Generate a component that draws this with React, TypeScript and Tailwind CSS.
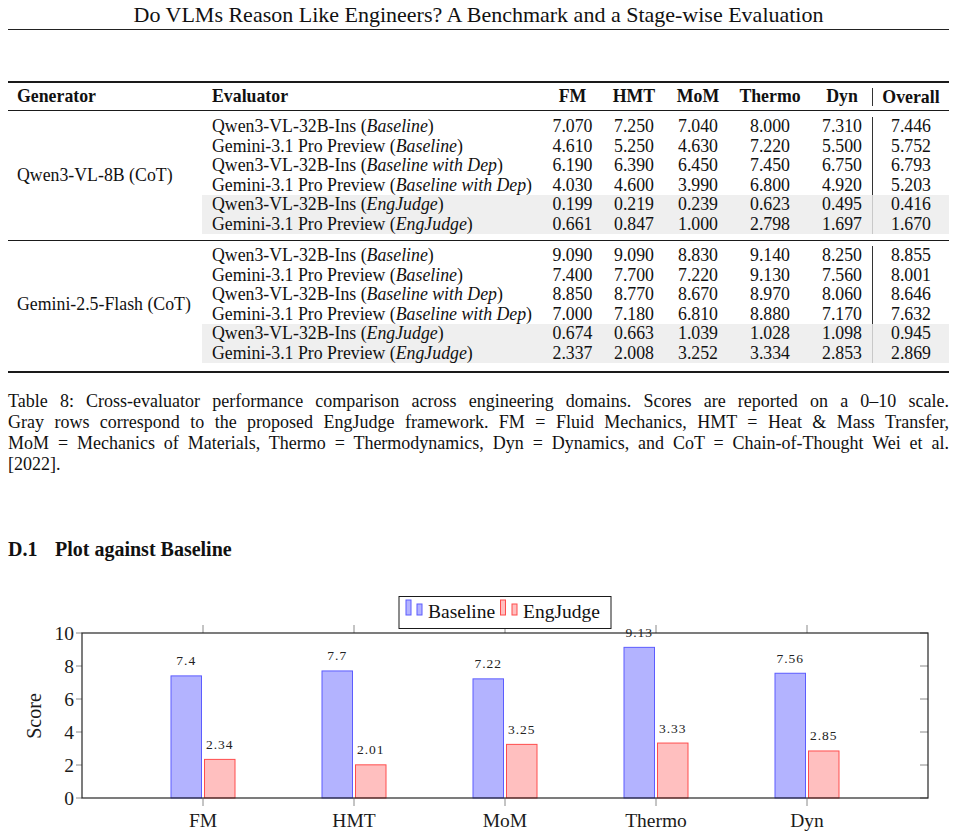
import React from "react";

type Row = {
  model: string;
  mode: string;
  scores: string[];
  overall: string;
  gray?: boolean;
};

const GROUPS: { generator: string; rows: Row[] }[] = [
  {
    generator: "Qwen3-VL-8B (CoT)",
    rows: [
      { model: "Qwen3-VL-32B-Ins", mode: "Baseline", scores: ["7.070", "7.250", "7.040", "8.000", "7.310"], overall: "7.446" },
      { model: "Gemini-3.1 Pro Preview", mode: "Baseline", scores: ["4.610", "5.250", "4.630", "7.220", "5.500"], overall: "5.752" },
      { model: "Qwen3-VL-32B-Ins", mode: "Baseline with Dep", scores: ["6.190", "6.390", "6.450", "7.450", "6.750"], overall: "6.793" },
      { model: "Gemini-3.1 Pro Preview", mode: "Baseline with Dep", scores: ["4.030", "4.600", "3.990", "6.800", "4.920"], overall: "5.203" },
      { model: "Qwen3-VL-32B-Ins", mode: "EngJudge", scores: ["0.199", "0.219", "0.239", "0.623", "0.495"], overall: "0.416", gray: true },
      { model: "Gemini-3.1 Pro Preview", mode: "EngJudge", scores: ["0.661", "0.847", "1.000", "2.798", "1.697"], overall: "1.670", gray: true },
    ],
  },
  {
    generator: "Gemini-2.5-Flash (CoT)",
    rows: [
      { model: "Qwen3-VL-32B-Ins", mode: "Baseline", scores: ["9.090", "9.090", "8.830", "9.140", "8.250"], overall: "8.855" },
      { model: "Gemini-3.1 Pro Preview", mode: "Baseline", scores: ["7.400", "7.700", "7.220", "9.130", "7.560"], overall: "8.001" },
      { model: "Qwen3-VL-32B-Ins", mode: "Baseline with Dep", scores: ["8.850", "8.770", "8.670", "8.970", "8.060"], overall: "8.646" },
      { model: "Gemini-3.1 Pro Preview", mode: "Baseline with Dep", scores: ["7.000", "7.180", "6.810", "8.880", "7.170"], overall: "7.632" },
      { model: "Qwen3-VL-32B-Ins", mode: "EngJudge", scores: ["0.674", "0.663", "1.039", "1.028", "1.098"], overall: "0.945", gray: true },
      { model: "Gemini-3.1 Pro Preview", mode: "EngJudge", scores: ["2.337", "2.008", "3.252", "3.334", "2.853"], overall: "2.869", gray: true },
    ],
  },
];

// widths of FM, HMT, MoM, Thermo, Dyn
const SCORE_COLS = ["w-[55px]", "w-[68px]", "w-[60px]", "w-[84px]", "w-[60px]"];
const HEADERS = ["FM", "HMT", "MoM", "Thermo", "Dyn"];

function DataRow({ row }: { row: Row }) {
  return (
    <div className={`flex h-[19.5px] items-center ${row.gray ? "bg-[#efefef]" : ""}`}>
      <div className="w-[343px] pl-[10px] whitespace-nowrap">
        {row.model} (<i>{row.mode}</i>)
      </div>
      {row.scores.map((s, i) => (
        <div key={i} className={`${SCORE_COLS[i]} text-center`}>
          {s}
        </div>
      ))}
      <div
        className={`flex h-full w-[77px] items-center justify-center border-l ${
          row.gray ? "border-[#c8c8c8]" : "border-[#333]"
        }`}
      >
        {row.overall}
      </div>
    </div>
  );
}

function RowGroup({ index, className }: { index: number; className: string }) {
  const group = GROUPS[index];
  return (
    <div className={`flex ${className}`}>
      <div className="flex w-[194px] items-center pl-[9px]">{group.generator}</div>
      <div className="flex flex-col">
        {group.rows.map((r, i) => (
          <DataRow key={i} row={r} />
        ))}
      </div>
    </div>
  );
}

function ResultsTable() {
  return (
    <div className="text-[17.8px] leading-[19.5px]">
      <div className="h-[2px] bg-[#1a1a1a]" />
      <div className="flex h-[27px] items-center font-bold">
        <div className="w-[194px] pl-[9px]">Generator</div>
        <div className="w-[343px] pl-[10px]">Evaluator</div>
        {HEADERS.map((h, i) => (
          <div key={h} className={`${SCORE_COLS[i]} text-center`}>
            {h}
          </div>
        ))}
        <div className="w-[77px] border-l border-[#333] text-center leading-[18px]">Overall</div>
      </div>
      <div className="h-px bg-[#1a1a1a]" />
      <RowGroup index={0} className="pt-[6px] pb-[6px]" />
      <div className="h-px bg-[#1a1a1a]" />
      <RowGroup index={1} className="pt-[5px] pb-[8px]" />
      <div className="h-[2px] bg-[#1a1a1a]" />
    </div>
  );
}

const CAPTION = [
  "Table 8: Cross-evaluator performance comparison across engineering domains. Scores are reported on a 0–10 scale.",
  "Gray rows correspond to the proposed EngJudge framework. FM = Fluid Mechanics, HMT = Heat & Mass Transfer,",
  "MoM = Mechanics of Materials, Thermo = Thermodynamics, Dyn = Dynamics, and CoT = Chain-of-Thought Wei et al.",
];

const DOMAINS = [
  { name: "FM", base: 7.4, eng: 2.34 },
  { name: "HMT", base: 7.7, eng: 2.01 },
  { name: "MoM", base: 7.22, eng: 3.25 },
  { name: "Thermo", base: 9.13, eng: 3.33 },
  { name: "Dyn", base: 7.56, eng: 2.85 },
];

const AX_L = 82;
const AX_R = 928;
const AX_T = 632;
const AX_B = 797;
const UNIT = 16.5;

function BarChart() {
  const yTicks = [0, 2, 4, 6, 8, 10];
  return (
    <svg width={941} height={277} viewBox="8 560 941 277" className="block" fontFamily="Liberation Serif, serif">
      {/* category ticks, outside top and bottom */}
      {DOMAINS.map((d, i) => {
        const cx = 203 + i * 151;
        return (
          <g key={d.name} stroke="#8a8a8a" strokeWidth={1}>
            <line x1={cx} y1={624} x2={cx} y2={AX_T} />
            <line x1={cx} y1={AX_B} x2={cx} y2={805} />
          </g>
        );
      })}
      {yTicks.map((v) => {
        const y = AX_B - v * UNIT;
        return (
          <g key={v}>
            <line x1={76} y1={y} x2={AX_L} y2={y} stroke="#8a8a8a" />
            <line x1={920} y1={y} x2={AX_R} y2={y} stroke="#8a8a8a" />
            <text x={74} y={y + 6.5} fontSize={19.5} textAnchor="end" fill="#1a1a1a">
              {v}
            </text>
          </g>
        );
      })}
      {DOMAINS.map((d, i) => {
        const cx = 203 + i * 151;
        const hb = d.base * UNIT;
        const he = d.eng * UNIT;
        return (
          <g key={d.name}>
            <rect x={cx - 32} y={AX_B - hb} width={30.5} height={hb} fill="#b3b3ff" stroke="#5c5cff" strokeWidth={1} />
            <rect x={cx + 1.5} y={AX_B - he} width={30.5} height={he} fill="#ffbfbf" stroke="#ff4d4d" strokeWidth={1} />
            <text x={cx - 16.75} y={AX_B - hb - 10.5} fontSize={13.5} letterSpacing={1} textAnchor="middle" fill="#222">
              {String(d.base)}
            </text>
            <text x={cx + 16.75} y={AX_B - he - 10.5} fontSize={13.5} letterSpacing={1} textAnchor="middle" fill="#222">
              {d.eng.toFixed(2)}
            </text>
            <text x={cx} y={826} fontSize={19.5} textAnchor="middle" fill="#1a1a1a">
              {d.name}
            </text>
          </g>
        );
      })}
      <rect x={AX_L} y={AX_T} width={AX_R - AX_L} height={AX_B - AX_T} fill="none" stroke="#262626" strokeWidth={1.2} />
      <text x={41} y={715} fontSize={20} textAnchor="middle" fill="#1a1a1a" transform="rotate(-90 41 715)">
        Score
      </text>
      {/* legend */}
      <rect x={399} y={595.5} width={212} height={32} fill="#fff" stroke="#1a1a1a" strokeWidth={1} />
      <rect x={406} y={599} width={5} height={15} fill="#b3b3ff" stroke="#5c5cff" />
      <rect x={417} y={603} width={5} height={11} fill="#b3b3ff" stroke="#5c5cff" />
      <text x={428} y={617} fontSize={19.5} fill="#111">
        Baseline
      </text>
      <rect x={500.5} y={599} width={5} height={15} fill="#ffbfbf" stroke="#ff4d4d" />
      <rect x={512} y={603} width={5} height={11} fill="#ffbfbf" stroke="#ff4d4d" />
      <text x={523} y={617} fontSize={19.5} fill="#111">
        EngJudge
      </text>
    </svg>
  );
}

export default function App() {
  return (
    <div className="h-[837px] w-[957px] overflow-hidden bg-white px-2 font-[family-name:Liberation_Serif,serif] text-[#111]">
      <div className="flex h-[30px] items-center justify-center border-b border-[#222] text-[22px] leading-[28px]">
        Do VLMs Reason Like Engineers? A Benchmark and a Stage-wise Evaluation
      </div>
      <div className="mt-[51px]">
        <ResultsTable />
      </div>
      <div className="mt-[18px] text-[18px] leading-[21px]">
        {CAPTION.map((line) => (
          <div key={line} className="whitespace-nowrap text-justify [text-align-last:justify]">
            {line}
          </div>
        ))}
        <div>[2022].</div>
      </div>
      <div className="mt-[62px] flex text-[20px] font-bold leading-[24px]">
        <span className="w-[47px]">D.1</span>
        <span>Plot against Baseline</span>
      </div>
      <BarChart />
    </div>
  );
}
